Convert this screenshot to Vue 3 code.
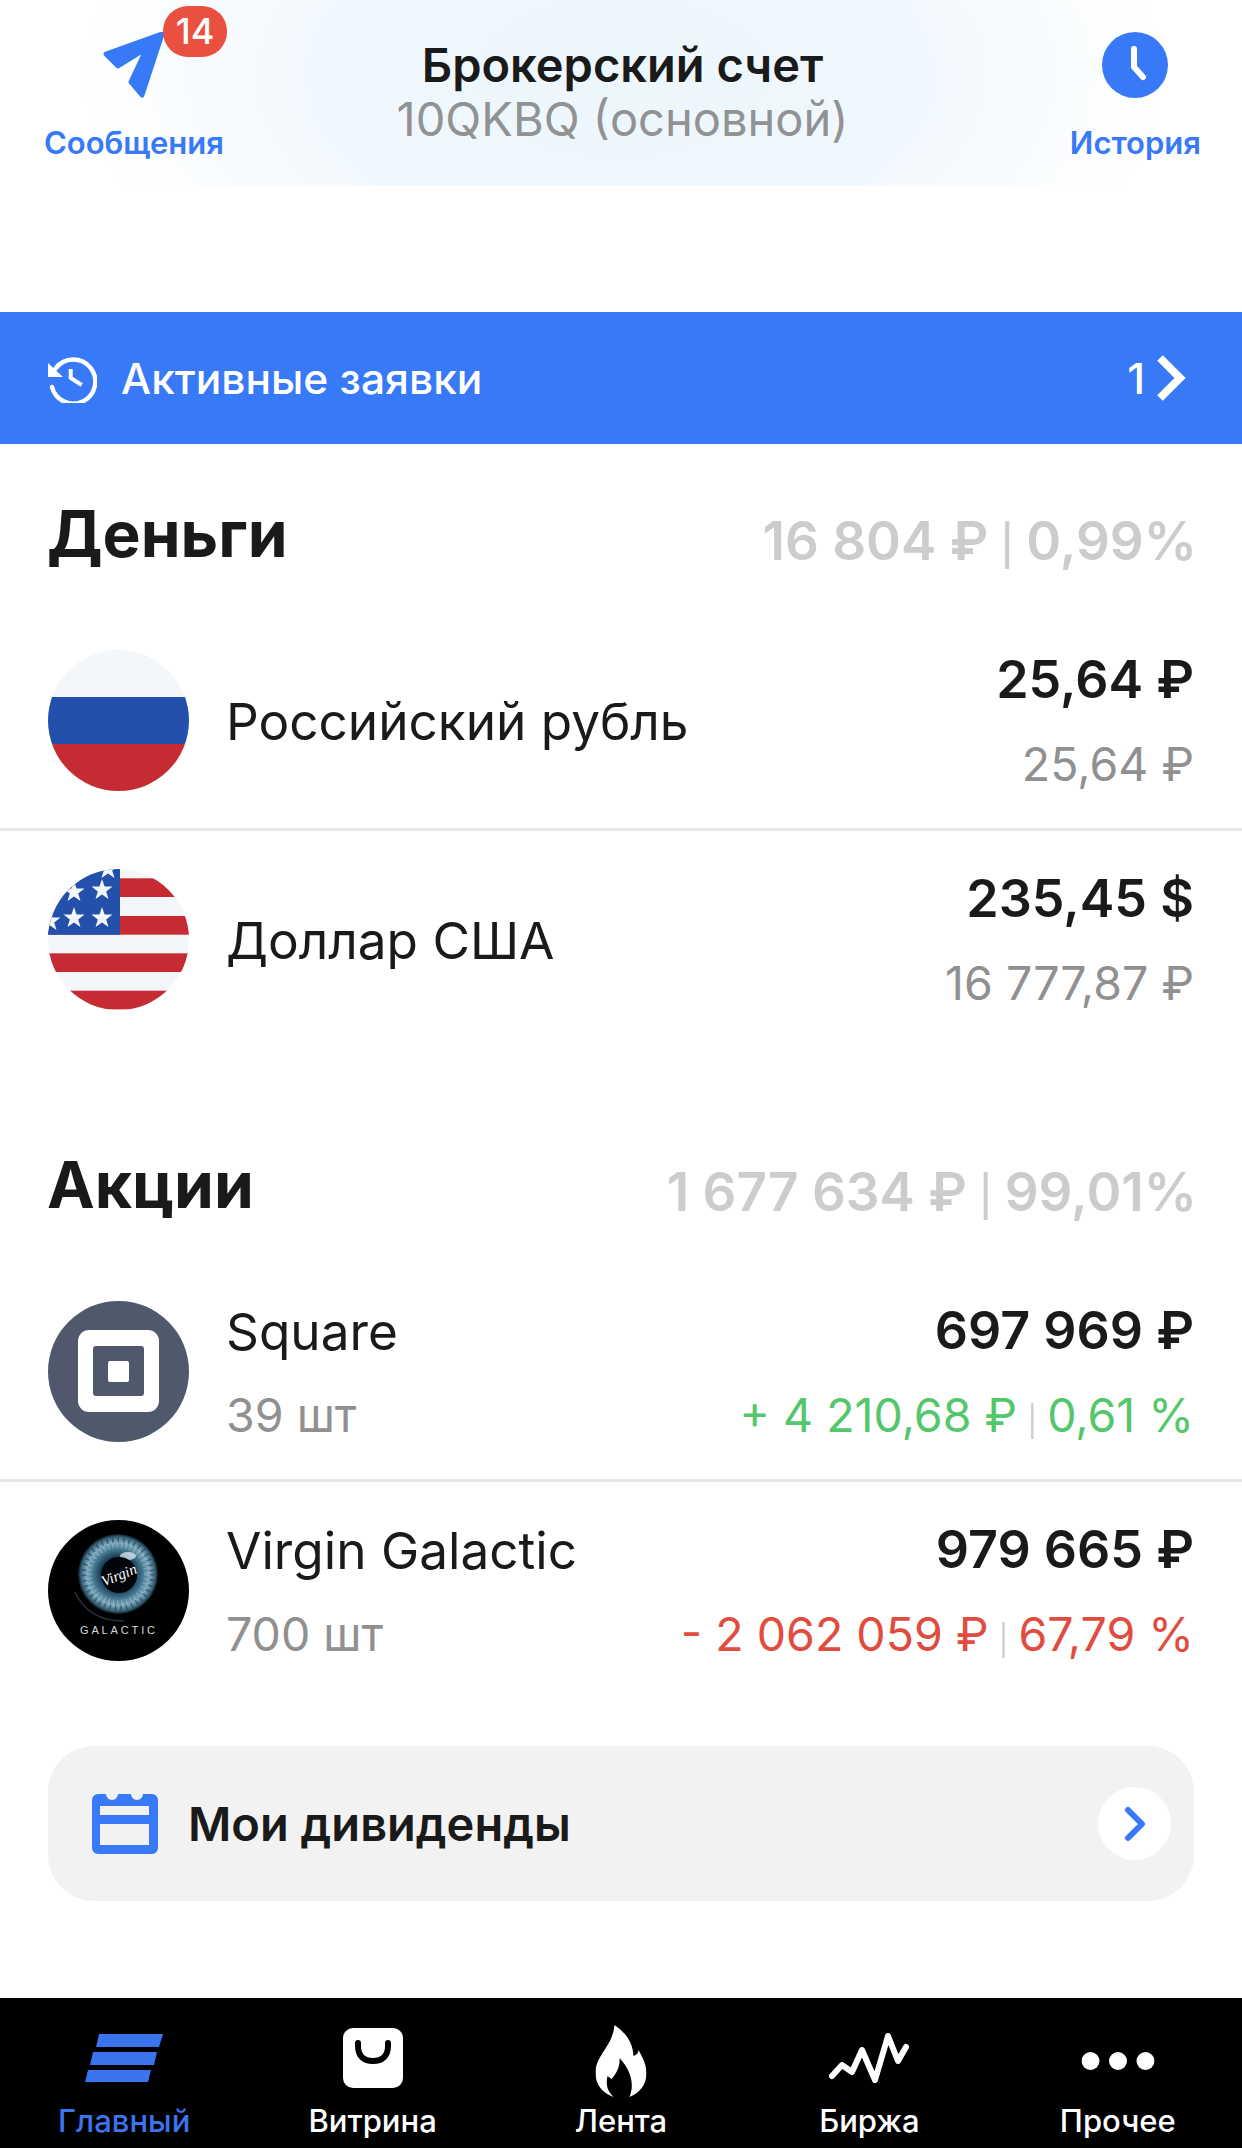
<template>
  <div class="page">
    <header class="top">
      <div class="top-btn left">
        <div class="top-icon">
          <svg width="62" height="66" viewBox="0 0 62 66">
            <path d="M59 2 L3 22 L15 34 L44 16 L28 50 L39 63 Z" fill="#3779f6" stroke="#3779f6" stroke-width="5" stroke-linejoin="round" />
          </svg>
          <span class="badge">14</span>
        </div>
        <span class="top-label">Сообщения</span>
      </div>
      <div class="title">
        <div class="title-main">Брокерский счет</div>
        <div class="title-sub">10QKBQ (основной)</div>
      </div>
      <div class="top-btn right">
        <div class="top-icon">
          <svg width="66" height="66" viewBox="0 0 66 66">
            <circle cx="33" cy="33" r="33" fill="#3779f6" />
            <path d="M32 17 V35 L41 45" fill="none" stroke="#fff" stroke-width="6" stroke-linecap="round" stroke-linejoin="round" />
          </svg>
        </div>
        <span class="top-label">История</span>
      </div>
    </header>

    <div class="orders">
      <svg width="49" height="49" viewBox="0 0 49 49">
        <path d="M8 14 A22 22 0 1 1 4 33" fill="none" stroke="#fff" stroke-width="4.5" stroke-linecap="round" />
        <path d="M0 9 V23 H15 Z" fill="#fff" />
        <path d="M22.7 15 V24 L33.7 31" fill="none" stroke="#fff" stroke-width="4" />
      </svg>
      <span class="orders-label">Активные заявки</span>
      <span class="orders-count">1</span>
      <svg width="31" height="48" viewBox="0 0 31 48">
        <path d="M5 4 L25 24 L5 44" fill="none" stroke="#fff" stroke-width="8" />
      </svg>
    </div>

    <section v-for="section of sections" :key="section.title" class="section">
      <div class="section-head">
        <h2>{{ section.title }}</h2>
        <span class="section-total">{{ section.total }}<span class="total-sep">|</span>{{ section.share }}</span>
      </div>
      <div v-for="(item, i) of section.items" :key="item.name" class="row" :class="{ divided: i > 0 }">
        <svg v-if="item.icon === 'ru'" class="avatar" viewBox="0 0 141 141">
          <rect width="141" height="47" fill="#f3f7fa" />
          <rect y="47" width="141" height="47" fill="#2250ab" />
          <rect y="94" width="141" height="47" fill="#c62a32" />
        </svg>
        <svg v-else-if="item.icon === 'us'" class="avatar" viewBox="0 0 141 141">
          <rect width="141" height="141" fill="#f3f7fa" />
          <rect v-for="y of [9.3, 47, 84.3, 121.7]" :key="y" :y="y" width="141" height="18.7" fill="#c62a32" />
          <rect width="72" height="65.7" fill="#2250ab" />
          <polygon v-for="s of stars" :key="s.join()" :points="starPoints(s[0], s[1])" fill="#f3f7fa" />
        </svg>
        <svg v-else-if="item.icon === 'square'" class="avatar" viewBox="0 0 141 141">
          <rect width="141" height="141" fill="#50586c" />
          <rect x="30" y="29" width="81" height="82" rx="11" fill="#fff" />
          <rect x="45" y="45" width="51" height="50" rx="3" fill="#50586c" />
          <rect x="60" y="60" width="21" height="21" rx="2" fill="#fff" />
        </svg>
        <svg v-else class="avatar" viewBox="0 0 141 141">
          <defs>
            <radialGradient id="iris" cx="50%" cy="50%" r="50%">
              <stop offset="42%" stop-color="#173a50" />
              <stop offset="62%" stop-color="#44778f" />
              <stop offset="80%" stop-color="#7fa9bf" />
              <stop offset="92%" stop-color="#3d6880" />
              <stop offset="100%" stop-color="#081822" />
            </radialGradient>
          </defs>
          <rect width="141" height="141" fill="#000" />
          <circle cx="70" cy="54" r="40" fill="url(#iris)" />
          <circle cx="70" cy="54" r="29" fill="none" stroke="#b9d6e6" stroke-width="6" stroke-dasharray="1.5 3" opacity=".35" />
          <circle cx="70" cy="54" r="34" fill="none" stroke="#0f2a3b" stroke-width="5" stroke-dasharray="1.5 4" opacity=".5" />
          <ellipse cx="80" cy="36" rx="8" ry="4" fill="#dcedf7" opacity=".75" />
          <circle cx="71" cy="55" r="18" fill="#02060a" />
          <path d="M27 72 C36 92 54 101 76 101" fill="none" stroke="#24343f" stroke-width="1.5" />
          <text x="71" y="60" class="virgin" transform="rotate(-22 71 55)">Virgin</text>
          <text x="32" y="114" class="galactic" textLength="75">GALACTIC</text>
        </svg>

        <div class="row-left">
          <div class="row-name">{{ item.name }}</div>
          <div v-if="item.qty" class="row-sub">{{ item.qty }}</div>
        </div>
        <div class="row-right">
          <div class="row-value">{{ item.value }}</div>
          <div class="row-sub" :class="item.tone">
            {{ item.change }}<template v-if="item.percent"><span class="sep">|</span>{{ item.percent }}</template>
          </div>
        </div>
      </div>
    </section>

    <div class="dividends">
      <svg width="66" height="60" viewBox="0 0 66 60">
        <path fill-rule="evenodd" fill="#3779f6" d="M6 0 H14 A6 6 0 0 0 26 0 H39 A6 6 0 0 0 51 0 H60 A6 6 0 0 1 66 6 V54 A6 6 0 0 1 60 60 H6 A6 6 0 0 1 0 54 V6 A6 6 0 0 1 6 0 Z M8 12 V21 H57 V12 Z M8 30 V51 H57 V30 Z" />
      </svg>
      <span class="dividends-label">Мои дивиденды</span>
      <span class="round-btn">
        <svg width="22" height="36" viewBox="0 0 22 36">
          <path d="M4 4 L18 18 L4 32" fill="none" stroke="#3779f6" stroke-width="6" stroke-linecap="round" stroke-linejoin="round" />
        </svg>
      </span>
    </div>

    <nav class="tabs">
      <div class="tab active">
        <svg width="78" height="48" viewBox="0 0 78 48">
          <path d="M14 0 H78 L74 13 H11 Z M8 18 H72 L69 31 H5 Z M3 36 H66 L63 48 H0 Z" fill="#3a74ee" />
        </svg>
        <span>Главный</span>
      </div>
      <div class="tab">
        <svg width="60" height="60" viewBox="0 0 60 60">
          <rect width="60" height="60" rx="10" fill="#fff" />
          <path d="M15 15 V18 C15 28 21 33 30 33 S45 28 45 18 V15" fill="none" stroke="#000" stroke-width="6" stroke-linecap="round" />
        </svg>
        <span>Витрина</span>
      </div>
      <div class="tab">
        <svg width="51" height="78" viewBox="0 -6 51 78">
          <path fill="#fff" d="M19 0 C30 8 37 16 38 31 C41 30 43 28 43 25 C47 32 51 40 51 48 C51 60 44 68 34 72 C39 60 36 46 24 33 C25 42 20 50 16 54 L12 51 C10 60 12 66 18 72 C7 68 0 60 0 48 C0 30 17 22 19 0 Z" />
        </svg>
        <span>Лента</span>
      </div>
      <div class="tab">
        <svg width="80" height="50" viewBox="0 0 80 50">
          <path d="M3 43 L13 32 L23 39 L33 17 L46 47 L59 3 L69 28 L77 14" fill="none" stroke="#fff" stroke-width="6" stroke-linecap="round" stroke-linejoin="round" />
        </svg>
        <span>Биржа</span>
      </div>
      <div class="tab">
        <svg width="73" height="24" viewBox="0 0 73 24">
          <circle cx="9" cy="15" r="9" fill="#fff" />
          <circle cx="36.5" cy="15" r="9" fill="#fff" />
          <circle cx="64" cy="15" r="9" fill="#fff" />
        </svg>
        <span>Прочее</span>
      </div>
    </nav>
  </div>
</template>

<script setup>
const sections = [
  {
    title: 'Деньги',
    total: '16 804 ₽',
    share: '0,99%',
    items: [
      { icon: 'ru', name: 'Российский рубль', value: '25,64 ₽', change: '25,64 ₽', tone: 'muted' },
      { icon: 'us', name: 'Доллар США', value: '235,45 $', change: '16 777,87 ₽', tone: 'muted' },
    ],
  },
  {
    title: 'Акции',
    total: '1 677 634 ₽',
    share: '99,01%',
    items: [
      { icon: 'square', name: 'Square', qty: '39 шт', value: '697 969 ₽', change: '+ 4 210,68 ₽', percent: '0,61 %', tone: 'up' },
      { icon: 'virgin', name: 'Virgin Galactic', qty: '700 шт', value: '979 665 ₽', change: '- 2 062 059 ₽', percent: '67,79 %', tone: 'down' },
    ],
  },
];

const stars = [[26, 23], [54, 21], [26, 49], [54, 49], [2, 52], [60, 0]];

// Точки пятиконечной звезды для флага
const starPoints = (cx, cy) => {
  const points = [];
  for (let i = 0; i < 10; i++) {
    const r = i % 2 === 0 ? 11 : 4.4;
    const a = -Math.PI / 2 + (i * Math.PI) / 5;
    points.push(`${(cx + r * Math.cos(a)).toFixed(1)},${(cy + r * Math.sin(a)).toFixed(1)}`);
  }
  return points.join(' ');
};
</script>

<style>
html, body {
  margin: 0;
  background: #fff;
}
</style>

<style scoped>
.page {
  width: 1242px;
  height: 2148px;
  display: flex;
  flex-direction: column;
  overflow: hidden;
  font-family: Inter, "Liberation Sans", sans-serif;
  color: #1a1a1a;
  background: #fff;
}

.top {
  height: 186px;
  flex-shrink: 0;
  padding: 0 41px 0 44px;
  box-sizing: border-box;
  display: grid;
  grid-template-columns: 1fr auto 1fr;
  background: radial-gradient(ellipse 540px 300px at 50% 40%, #ecf6fd 0%, #f1f8fd 55%, #ffffff 100%);
}

.top-btn {
  display: flex;
  flex-direction: column;
  align-items: center;
  padding-top: 32px;
}

.left {
  justify-self: start;
}

.right {
  justify-self: end;
}

.top-icon {
  position: relative;
  height: 66px;
}

.badge {
  position: absolute;
  left: 60px;
  top: -26px;
  width: 64px;
  height: 51px;
  border-radius: 25px;
  background: #e9503f;
  color: #fff;
  font-size: 36px;
  font-weight: 500;
  line-height: 51px;
  text-align: center;
}

.top-label {
  margin-top: 27px;
  font-size: 31px;
  line-height: 36px;
  font-weight: 600;
  color: #3779f6;
}

.title {
  text-align: center;
  padding-top: 38px;
}

.title-main {
  font-size: 47px;
  line-height: 54px;
  font-weight: 600;
}

.title-sub {
  font-size: 47px;
  line-height: 53px;
  color: #909294;
}

.orders {
  margin-top: 126px;
  height: 132px;
  flex-shrink: 0;
  padding: 0 56px 0 48px;
  box-sizing: border-box;
  display: flex;
  align-items: center;
  background: #3779f6;
  color: #fff;
}

.orders-label {
  margin-left: 24px;
  flex: 1;
  font-size: 42.5px;
  font-weight: 500;
}

.orders-count {
  margin-right: 10px;
  font-size: 43px;
  font-weight: 500;
}

.section-head {
  height: 167px;
  padding: 58px 45px 0 47px;
  box-sizing: border-box;
  display: flex;
  justify-content: space-between;
  align-items: flex-start;
}

.section + .section {
  margin-top: 48px;
}

.section-head h2 {
  margin: 0;
  font-size: 64px;
  line-height: 64px;
  font-weight: 700;
}

.section-total {
  font-size: 53px;
  line-height: 78px;
  font-weight: 600;
  color: #cccccc;
}

.total-sep {
  margin: 0 12px;
  font-size: 40px;
  font-weight: 500;
}

.row {
  padding: 39px 48px 37px 48px;
  display: flex;
  align-items: center;
}

.divided {
  padding-top: 38px;
  border-top: 3px solid #e6e6e6;
}

.avatar {
  width: 141px;
  height: 141px;
  border-radius: 50%;
  flex-shrink: 0;
}

.row-left {
  margin-left: 37px;
  flex: 1;
}

.row-name {
  font-size: 51.3px;
  line-height: 60px;
}

.row-right {
  text-align: right;
}

.row-value {
  font-size: 52px;
  line-height: 60px;
  font-weight: 600;
}

.row-sub {
  margin-top: 28px;
  font-size: 46.5px;
  line-height: 53px;
  color: #909090;
}

.up {
  color: #54c76d;
}

.down {
  color: #e24c3f;
}

.sep {
  margin: 0 10px;
  font-size: 30px;
  line-height: 1;
  color: #cfcfcf;
}

.virgin {
  font-family: "Liberation Serif", serif;
  font-style: italic;
  font-size: 15px;
  fill: #fff;
  text-anchor: middle;
}

.galactic {
  font-family: "Liberation Sans", sans-serif;
  font-size: 11px;
  fill: #d8d8d8;
}

.dividends {
  margin: 48px 48px 0;
  height: 155px;
  flex-shrink: 0;
  padding: 0 23px 0 44px;
  box-sizing: border-box;
  display: flex;
  align-items: center;
  border-radius: 46px;
  background: #f2f2f2;
}

.dividends-label {
  margin-left: 30px;
  flex: 1;
  font-size: 47px;
  font-weight: 600;
}

.round-btn {
  width: 73px;
  height: 73px;
  border-radius: 50%;
  background: #fff;
  display: flex;
  align-items: center;
  justify-content: center;
}

.tabs {
  margin-top: auto;
  height: 150px;
  flex-shrink: 0;
  display: grid;
  grid-template-columns: repeat(5, 1fr);
  background: #000;
  color: #fff;
}

.tab {
  position: relative;
  display: flex;
  flex-direction: column;
  align-items: center;
  justify-content: flex-end;
  font-size: 31px;
  font-weight: 500;
}

.tab svg {
  position: absolute;
  left: 50%;
  top: 60px;
  transform: translate(-50%, -50%);
}

.tab span {
  line-height: 36px;
  margin-bottom: 9px;
}

.active {
  color: #3a74ee;
}
</style>
